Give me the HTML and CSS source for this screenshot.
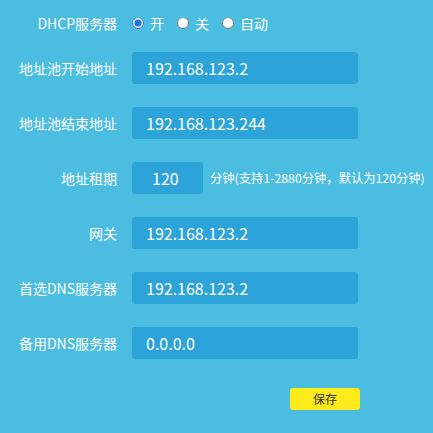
FILE: index.html
```html
<!DOCTYPE html>
<html lang="zh-CN">
<head>
<meta charset="utf-8">
<title>DHCP服务器</title>
<link rel="stylesheet" href="styles.css">
</head>
<body>
<div class="viewport">
  <div class="content">
    <div class="row row-radio">
      <div class="label">DHCP服务器</div>
      <div class="radios">
        <label class="radio"><input type="radio" name="dhcp" checked><span>开</span></label>
        <label class="radio"><input type="radio" name="dhcp"><span>关</span></label>
        <label class="radio"><input type="radio" name="dhcp"><span>自动</span></label>
      </div>
    </div>
    <div class="row">
      <div class="label">地址池开始地址</div>
      <div class="field">192.168.123.2</div>
    </div>
    <div class="row">
      <div class="label">地址池结束地址</div>
      <div class="field">192.168.123.244</div>
    </div>
    <div class="row">
      <div class="label">地址租期</div>
      <div class="field field-short">120</div>
      <div class="hint">分钟(支持1-2880分钟，默认为120分钟)</div>
    </div>
    <div class="row">
      <div class="label">网关</div>
      <div class="field">192.168.123.2</div>
    </div>
    <div class="row">
      <div class="label">首选DNS服务器</div>
      <div class="field">192.168.123.2</div>
    </div>
    <div class="row">
      <div class="label">备用DNS服务器</div>
      <div class="field">0.0.0.0</div>
    </div>
    <div class="actions">
      <button class="save" type="button">保存</button>
    </div>
  </div>
</div>
</body>
</html>
```

FILE: styles.css
```css
html, body {
  margin: 0;
  padding: 0;
  background: #4bbde1;
  height: 100%;
}
body {
  font-family: "Noto Sans CJK SC", "Noto Sans", sans-serif;
  color: #ffffff;
}
.viewport {
  margin-top: 18px;
  height: 415px;
  overflow: hidden;
}
.content {
  margin-top: -11px;
}
.row {
  display: flex;
  align-items: center;
  height: 32px;
  margin-bottom: 23px;
}
.row-radio {
  margin-bottom: 13px;
}
.label {
  width: 117px;
  flex: none;
  text-align: right;
  font-size: 14px;
  line-height: 20px;
  margin-right: 15px;
  white-space: nowrap;
}
.radios {
  display: flex;
  align-items: center;
  font-size: 14px;
}
.radio {
  display: flex;
  align-items: center;
  margin-right: 13px;
}
.radio input {
  flex: none;
  width: 12px;
  height: 12px;
  margin: 0 6px 0 0;
  accent-color: #1a73f0;
}
.field {
  flex: none;
  width: 226px;
  height: 32px;
  box-sizing: border-box;
  padding-left: 14px;
  background: #2ca3d9;
  border-radius: 3px;
  font-size: 16px;
  line-height: 32px;
  white-space: nowrap;
}
.field.field-short {
  width: 71px;
  padding-left: 20px;
  margin-right: 7px;
}
.hint {
  font-size: 12.3px;
  white-space: nowrap;
}
.actions {
  display: flex;
  margin-top: 29px;
  padding-left: 290px;
}
.save {
  width: 70px;
  height: 22px;
  padding: 0;
  border: none;
  border-radius: 3px;
  background: #fcea1b;
  color: #333333;
  font-family: "Noto Sans CJK SC", sans-serif;
  font-size: 12px;
  line-height: 22px;
}
```
